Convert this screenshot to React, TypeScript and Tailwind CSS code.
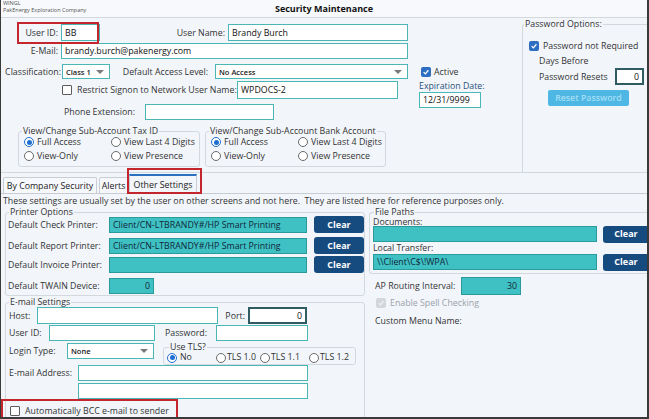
import React from 'react';

const whiteBox = 'bg-white border border-[#4ab6b6]';
const tealBox = 'bg-[#3fc1c3] border border-[#2a9a9d] text-[#12263a]';

const Box = ({ className = '', right = false, children = null }: any) => (
  <div className={`box-border flex items-center px-[3px] overflow-hidden whitespace-nowrap text-[#111] ${right ? 'justify-end' : ''} ${className}`}>
    {children}
  </div>
);

const Select = ({ className = '', value }: any) => (
  <div className={`box-border flex items-center pl-[3px] pr-[5px] bg-white border border-[#4ab6b6] ${className}`}>
    <span className="text-[7.5px] font-semibold text-[#222]">{value}</span>
    <span className="ml-auto w-0 h-0 border-l-[4px] border-r-[4px] border-t-[4px] border-l-transparent border-r-transparent border-t-[#7a7a7a]" />
  </div>
);

const Check = ({ checked = false, disabled = false }: any) => {
  if (disabled)
    return (
      <span className="w-[10px] h-[10px] rounded-[2px] bg-[#d3d7db] flex items-center justify-center shrink-0">
        <svg viewBox="0 0 10 10" className="w-[8px] h-[8px]">
          <path d="M2 5.2 L4.2 7.3 L8 2.8" stroke="#eef0f2" strokeWidth="1.6" fill="none" />
        </svg>
      </span>
    );
  if (checked)
    return (
      <span className="w-[10px] h-[10px] rounded-[2px] bg-[#2e6ec2] flex items-center justify-center shrink-0">
        <svg viewBox="0 0 10 10" className="w-[8px] h-[8px]">
          <path d="M2 5.2 L4.2 7.3 L8 2.8" stroke="white" strokeWidth="1.6" fill="none" />
        </svg>
      </span>
    );
  return <span className="block w-[10px] h-[10px] rounded-[1px] border border-[#5c5c5c] bg-white shrink-0" />;
};

const Radio = ({ on = false }: any) => (
  <span
    className={`w-[10px] h-[10px] rounded-full border bg-white shrink-0 flex items-center justify-center ${
      on ? 'border-[#1f6fd1]' : 'border-[#6a6a6a]'
    }`}
  >
    {on && <span className="w-[5px] h-[5px] rounded-full bg-[#1f6fd1]" />}
  </span>
);

// group box; padding goes on the inner div so the legend keeps its own offset
const Group = ({ title, className = '', legendClass = 'ml-[3px]', bodyClass = '', children }: any) => (
  <fieldset className={`border border-[#d2d8de] rounded-[3px] ${className}`}>
    <legend className={`px-[1px] leading-[8px] ${legendClass}`}>{title}</legend>
    <div className={bodyClass}>{children}</div>
  </fieldset>
);

const Clear = ({ className = '' }: any) => (
  <div className={`h-[17px] rounded-[3px] bg-[#164b80] text-white font-bold text-[9px] flex items-center justify-center shrink-0 ${className}`}>
    Clear
  </div>
);

const SubAccount = ({ title, className = '' }: any) => (
  <Group title={title} className={`h-[40px] ${className}`}>
    <div className="grid grid-cols-[87px_1fr] pl-[5px]">
      <div className="h-[14px] flex items-center"><Radio on /><span className="ml-[3px]">Full Access</span></div>
      <div className="h-[14px] flex items-center"><Radio /><span className="ml-[3px]">View Last 4 Digits</span></div>
      <div className="h-[14px] flex items-center"><Radio /><span className="ml-[3px]">View-Only</span></div>
      <div className="h-[14px] flex items-center"><Radio /><span className="ml-[3px]">View Presence</span></div>
    </div>
  </Group>
);

const PrinterRow = ({ label, value = '', className = '' }: any) => (
  <div className={`flex items-center h-[17px] ${className}`}>
    <span className="w-[101px]">{label}</span>
    <Box className={`w-[198px] h-[16px] ${tealBox}`}>{value}</Box>
    <Clear className="ml-[7px] w-[50px]" />
  </div>
);

export default function App() {
  return (
    <div className="relative w-[649px] h-[419px] overflow-hidden bg-[#f2f6fb] border-l border-r-2 border-b-2 border-[#3a3a3a] text-[8.8px] leading-[10px] text-[#333] font-['Open_Sans',sans-serif]">
      {/* title bar */}
      <div className="h-[18px] flex border-b border-[#d3d8dd] bg-[#f7f9fc]">
        <div className="w-[120px] pl-[2px] text-[5.5px] leading-[7px] text-[#555]">
          <div>WINGL</div>
          <div>PakEnergy Exploration Company</div>
        </div>
        <div className="flex-1 text-center font-bold text-[9px] leading-[17px] text-[#111]">Security Maintenance</div>
        <div className="w-[120px]" />
      </div>

      {/* top area */}
      <div className="h-[155px] flex border-b border-[#d3d8dd]">
        <div className="w-[521px] flex flex-col">
          <div className="flex">
            <div className="w-[414px] flex flex-col">
              <div className="flex items-center h-[17px] mt-[6px]">
                <span className="w-[57px] text-right">User ID:</span>
                <Box className={`ml-[3px] w-[39px] h-[17px] ${whiteBox}`}>BB</Box>
                <span className="w-[125px] text-right">User Name:</span>
                <Box className={`ml-[3px] w-[180px] h-[17px] ${whiteBox}`}>Brandy Burch</Box>
              </div>
              <div className="flex items-center h-[16px] mt-[2px]">
                <span className="w-[57px] text-right">E-Mail:</span>
                <Box className={`ml-[3px] w-[347px] h-[16px] ${whiteBox}`}>brandy.burch@pakenergy.com</Box>
              </div>
              <div className="flex items-center h-[15px] mt-[5px]">
                <span className="w-[60px] text-right">Classification:</span>
                <Select className="ml-[1px] w-[48px] h-[15px]" value="Class 1" />
                <span className="w-[98px] text-right">Default Access Level:</span>
                <Select className="ml-[7px] w-[193px] h-[15px]" value="No Access" />
              </div>
              <div className="flex items-center h-[18px] mt-[2px]">
                <span className="ml-[61px]"><Check /></span>
                <span className="ml-[5px] w-[160px] whitespace-nowrap">Restrict Signon to Network User Name:</span>
                <Box className={`w-[161px] h-[18px] ${whiteBox}`}>WPDOCS-2</Box>
              </div>
              <div className="flex items-center h-[16px] mt-[5px]">
                <span className="w-[134px] text-right">Phone Extension:</span>
                <Box className={`ml-[10px] w-[129px] h-[16px] ${whiteBox}`} />
              </div>
            </div>
            <div className="flex-1 flex flex-col">
              <div className="flex items-center mt-[49px] ml-[6px] h-[10px]">
                <Check checked />
                <span className="ml-[3px]">Active</span>
              </div>
              <div className="ml-[4px] mt-[4px] text-[#2a5179]">Expiration Date:</div>
              <Box className={`ml-[4px] mt-[1px] w-[62px] h-[16px] ${whiteBox}`}>12/31/9999</Box>
            </div>
          </div>
          <div className="flex mt-[7px] ml-[17px]">
            <SubAccount title="View/Change Sub-Account Tax ID" className="w-[182px]" />
            <SubAccount title="View/Change Sub-Account Bank Account" className="ml-[5px] w-[181px]" />
          </div>
        </div>

        <fieldset className="flex-1 mt-[2px] h-[153px] border border-r-0 border-b-0 border-[#d2d8de] rounded-tl-[3px]">
          <legend className="ml-[1px] px-[1px] leading-[8px]">Password Options:</legend>
          <div className="pl-[6px]">
            <div className="flex items-center h-[10px] mt-[13px]">
              <Check checked />
              <span className="ml-[4px]">Password not Required</span>
            </div>
            <div className="ml-[10px] mt-[5px]">Days Before</div>
            <div className="flex items-center h-[17px] mt-[2px]">
              <span className="ml-[10px] w-[76px]">Password Resets</span>
              <Box right className="w-[29px] h-[17px] bg-white border-2 border-[#2f5b63]">0</Box>
            </div>
            <div className="ml-[19px] mt-[5px] w-[81px] h-[16px] rounded-[2px] bg-[#4eb7e4] text-[#a3def6] font-semibold flex items-center justify-center">
              Reset Password
            </div>
          </div>
        </fieldset>
      </div>

      {/* tabs */}
      <div className="h-[21px] flex items-end border-b border-[#c6ccd2]">
        <div className="ml-[2px] w-[94px] h-[16px] border border-b-0 border-[#c9ced4] rounded-t-[2px] bg-[#f6f8fb] flex items-center justify-center text-[#222]">
          By Company Security
        </div>
        <div className="ml-[2px] w-[29px] h-[16px] border border-b-0 border-[#c9ced4] rounded-t-[2px] bg-[#f6f8fb] flex items-center justify-center text-[#222]">
          Alerts
        </div>
        <div className="ml-[1px] -mb-px w-[68px] h-[20px] border border-b-0 border-[#c9ced4] border-t-2 border-t-[#2a6fc2] bg-[#f2f6fb] flex items-center justify-center text-[#222]">
          Other Settings
        </div>
      </div>

      <div className="mt-[2px] ml-[2px] text-[#333] whitespace-nowrap">
        These settings are usually set by the user on other screens and not here.&nbsp; They are listed here for reference purposes only.
      </div>

      {/* lower area */}
      <div className="flex mt-[2px]">
        <div className="ml-[4px] w-[367px] flex flex-col">
          <Group title="Printer Options" className="pb-[1px]" bodyClass="pl-[2px]">
            <PrinterRow label="Default Check Printer:" value="Client/CN-LTBRANDY#/HP Smart Printing" />
            <PrinterRow label="Default Report Printer:" value="Client/CN-LTBRANDY#/HP Smart Printing" className="mt-[4px]" />
            <PrinterRow label="Default Invoice Printer:" className="mt-[2px]" />
            <div className="flex items-center h-[17px] mt-[4px]">
              <span className="w-[101px]">Default TWAIN Device:</span>
              <Box right className={`w-[45px] h-[16px] ${tealBox}`}>0</Box>
            </div>
          </Group>

          <Group title="E-mail Settings" className="mt-[2px] h-[130px] rounded-b-none" bodyClass="pl-[3px]">
            <div className="flex items-center h-[17px] mt-[1px]">
              <span className="w-[28px]">Host:</span>
              <Box className={`w-[181px] h-[17px] ${whiteBox}`} />
              <span className="w-[27px] text-right">Port:</span>
              <Box right className="ml-[3px] w-[59px] h-[17px] bg-white border-2 border-[#2f5b63]">0</Box>
            </div>
            <div className="flex items-center h-[16px] mt-[1px]">
              <span className="w-[40px]">User ID:</span>
              <Box className={`w-[106px] h-[16px] ${whiteBox}`} />
              <span className="ml-[10px] w-[51px]">Password:</span>
              <Box className={`w-[92px] h-[16px] ${whiteBox}`} />
            </div>
            <div className="flex items-start h-[22px] mt-[2px]">
              <span className="w-[58px] h-[16px] flex items-center">Login Type:</span>
              <Select className="w-[87px] h-[16px]" value="None" />
              <fieldset className="ml-[9px] w-[193px] h-[22px] border border-[#d2d8de] rounded-[3px]">
                <legend className="ml-[5px] px-[1px] leading-[8px]">Use TLS?</legend>
                <div className="flex items-center h-[11px] mt-[1px] pl-[3px] leading-[9px]">
                  <div className="w-[49px] flex items-center"><Radio on /><span className="ml-[3px]">No</span></div>
                  <div className="w-[44px] flex items-center"><Radio /><span className="ml-[1px]">TLS 1.0</span></div>
                  <div className="w-[49px] flex items-center"><Radio /><span className="ml-[1px]">TLS 1.1</span></div>
                  <div className="flex items-center"><Radio /><span className="ml-[1px]">TLS 1.2</span></div>
                </div>
              </fieldset>
            </div>
            <div className="flex items-center h-[16px]">
              <span className="w-[69px]">E-mail Address:</span>
              <Box className={`w-[230px] h-[16px] ${whiteBox}`} />
            </div>
            <Box className={`mt-[2px] ml-[69px] w-[230px] h-[16px] ${whiteBox}`} />
            <div className="flex items-center h-[19px] mt-[2px]">
              <span className="ml-[1px]"><Check /></span>
              <span className="ml-[5px]">Automatically BCC e-mail to sender</span>
            </div>
          </Group>
        </div>

        <div className="ml-[4px] flex-1 flex flex-col">
          <Group title="File Paths" legendClass="ml-[4px]" className="border-r-0 rounded-r-none pb-[3px]" bodyClass="pl-[3px]">
            <div className="leading-[8px] mt-[2px]">Documents:</div>
            <div className="flex items-center h-[16px]">
              <Box className={`w-[224px] h-[16px] ${tealBox}`} />
              <Clear className="ml-[6px] w-[46px] h-[16px]" />
            </div>
            <div className="leading-[9px] mt-[2px]">Local Transfer:</div>
            <div className="flex items-center h-[16px] mt-[1px]">
              <Box className={`w-[224px] h-[16px] ${tealBox}`}>\\Client\C$\!WPA\</Box>
              <Clear className="ml-[6px] w-[46px] h-[16px]" />
            </div>
          </Group>
          <div className="flex items-center h-[18px] mt-[3px] pl-[6px]">
            <span className="w-[86px]">AP Routing Interval:</span>
            <Box right className={`w-[60px] h-[18px] ${tealBox}`}>30</Box>
          </div>
          <div className="flex items-center h-[10px] mt-[3px] pl-[7px]">
            <Check disabled />
            <span className="ml-[4px] text-[#9aa1a8]">Enable Spell Checking</span>
          </div>
          <div className="mt-[8px] pl-[6px]">Custom Menu Name:</div>
        </div>
      </div>

      {/* highlight boxes */}
      <div className="absolute left-[16px] top-[22px] w-[82px] h-[22px] border-2 border-[#c3262d]" />
      <div className="absolute left-[126px] top-[168px] w-[75px] h-[26px] border-2 border-[#c3262d]" />
      <div className="absolute left-0 top-[399px] w-[177px] h-[20px] border-2 border-[#c3262d]" />
    </div>
  );
}
